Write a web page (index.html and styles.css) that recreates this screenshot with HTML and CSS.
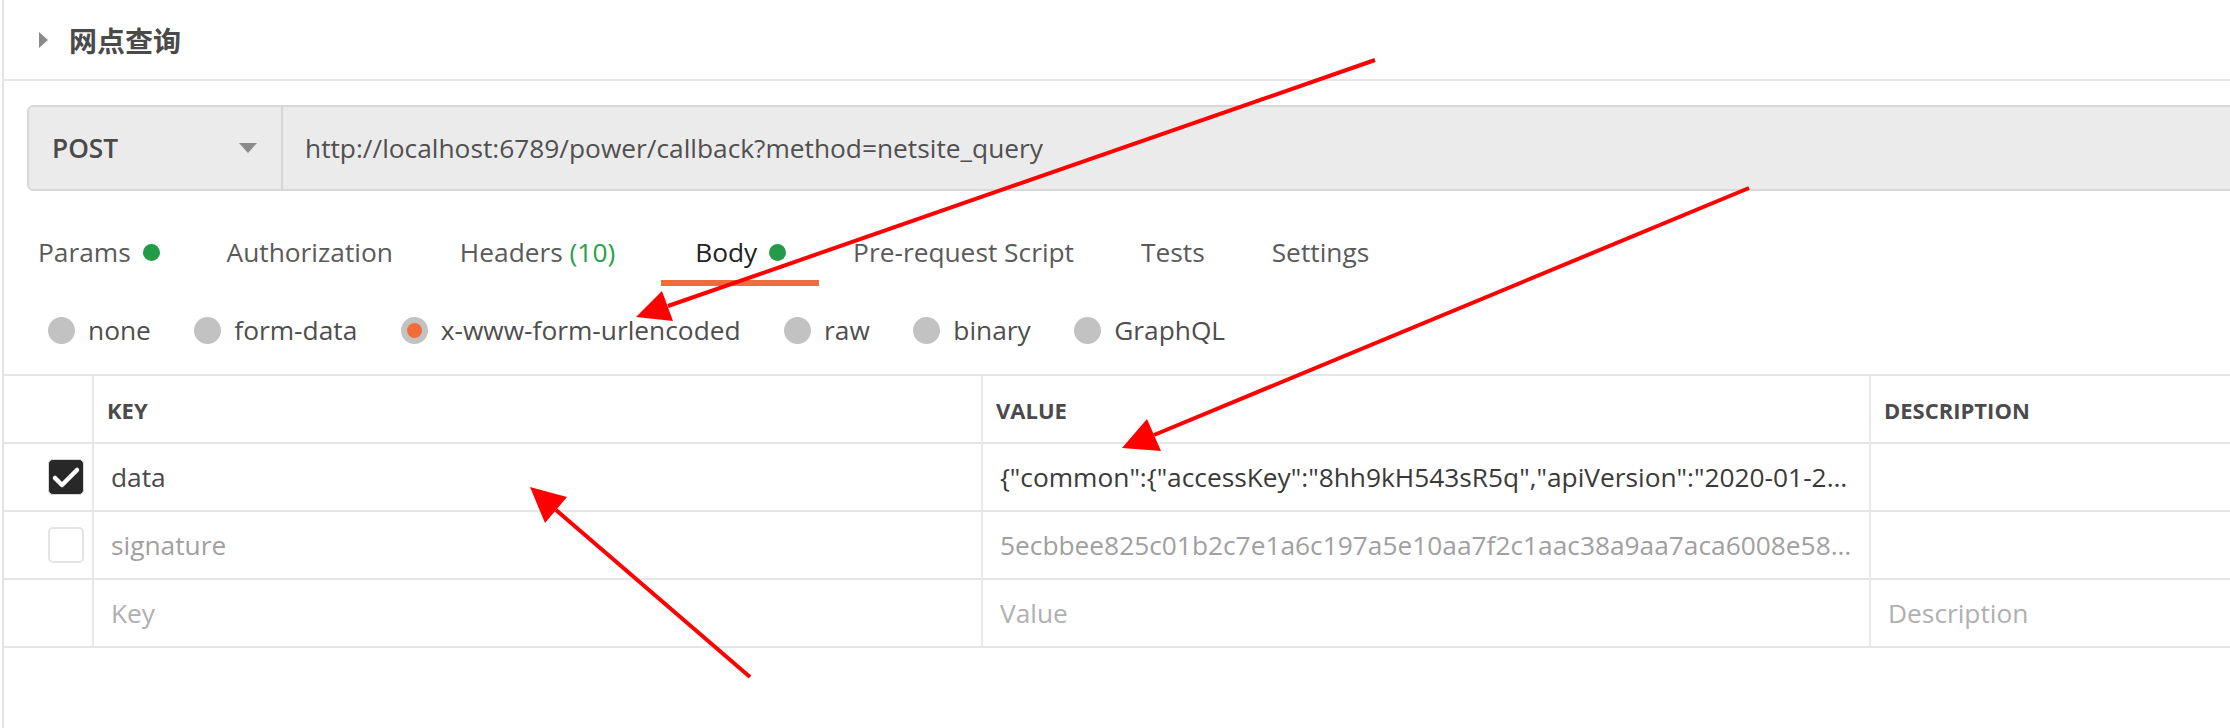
FILE: index.html
```html
<!DOCTYPE html>
<html lang="zh">
<head>
<meta charset="utf-8">
<title>网点查询</title>
<link rel="stylesheet" href="styles.css">
</head>
<body>
<div class="page">
  <header class="header">
    <span class="caret"></span>
    <h1 class="title">网点查询</h1>
  </header>

  <section class="request">
    <div class="urlbar">
      <div class="method">
        <span class="method-name">POST</span>
        <span class="method-arrow"></span>
      </div>
      <div class="url">http://localhost:6789/power/callback?method=netsite_query</div>
    </div>
  </section>

  <nav class="tabs">
    <div class="tab">Params <span class="dot"></span></div>
    <div class="tab">Authorization</div>
    <div class="tab">Headers <span class="count">(10)</span></div>
    <div class="tab tab-active">Body <span class="dot"></span></div>
    <div class="tab">Pre-request Script</div>
    <div class="tab">Tests</div>
    <div class="tab">Settings</div>
  </nav>

  <div class="radios">
    <div class="radio"><span class="radio-dot"></span>none</div>
    <div class="radio"><span class="radio-dot"></span>form-data</div>
    <div class="radio"><span class="radio-dot radio-on"></span>x-www-form-urlencoded</div>
    <div class="radio"><span class="radio-dot"></span>raw</div>
    <div class="radio"><span class="radio-dot"></span>binary</div>
    <div class="radio"><span class="radio-dot"></span>GraphQL</div>
  </div>

  <div class="table">
    <div class="row row-head">
      <div class="cell cell-check"></div>
      <div class="cell">KEY</div>
      <div class="cell">VALUE</div>
      <div class="cell">DESCRIPTION</div>
    </div>
    <div class="row">
      <div class="cell cell-check">
        <span class="checkbox checked">
          <svg viewBox="0 0 36 36" width="36" height="36"><polyline points="7,19 14,26 29,11" fill="none" stroke="#fff" stroke-width="4.5" stroke-linecap="round" stroke-linejoin="round"/></svg>
        </span>
      </div>
      <div class="cell text-dark">data</div>
      <div class="cell text-value"><span class="clip">{"common":{"accessKey":"8hh9kH543sR5q","apiVersion":"2020-01-20","method":"netsite_query","timestamp":"1590000000"}}</span></div>
      <div class="cell"></div>
    </div>
    <div class="row">
      <div class="cell cell-check"><span class="checkbox"></span></div>
      <div class="cell text-muted">signature</div>
      <div class="cell text-muted"><span class="clip">5ecbbee825c01b2c7e1a6c197a5e10aa7f2c1aac38a9aa7aca6008e58f0d1b2c3</span></div>
      <div class="cell"></div>
    </div>
    <div class="row">
      <div class="cell cell-check"></div>
      <div class="cell text-placeholder">Key</div>
      <div class="cell text-placeholder">Value</div>
      <div class="cell text-placeholder">Description</div>
    </div>
  </div>

  <svg class="annotations" viewBox="0 0 2230 728" width="2230" height="728">
    <g stroke="#ff0000" stroke-width="4" fill="none" stroke-linecap="butt">
      <line x1="1375" y1="60" x2="668" y2="306"/>
      <line x1="1749" y1="188" x2="1154" y2="435"/>
      <line x1="750" y1="677" x2="556" y2="510"/>
    </g>
    <g fill="#ff0000">
      <polygon points="636,317 662,291 673,321"/>
      <polygon points="1122,448 1147,419 1161,451"/>
      <polygon points="530,487 545,523 567,497"/>
    </g>
  </svg>
</div>
</body>
</html>
```

FILE: styles.css
```css
* {
  box-sizing: border-box;
}

html, body {
  margin: 0;
  padding: 0;
  background: #ffffff;
  overflow: hidden;
}

body {
  font-family: "Open Sans", "Noto Sans", "Noto Sans CJK SC", sans-serif;
  font-size: 26.3px;
  color: #505050;
}

.page {
  position: relative;
  margin-left: 2px;
  border-left: 2px solid #e4e4e4;
  min-height: 728px;
}

/* Header */
.header {
  display: flex;
  align-items: center;
  height: 81px;
  padding-left: 35px;
  border-bottom: 2px solid #e6e6e6;
}

.caret {
  width: 0;
  height: 0;
  border-left: 9px solid #8a8a8a;
  border-top: 8px solid transparent;
  border-bottom: 8px solid transparent;
  margin-right: 21px;
}

.title {
  margin: 0;
  font-family: "Noto Sans CJK SC", "Noto Sans", sans-serif;
  font-size: 28px;
  font-weight: 700;
  color: #4a4a4a;
  line-height: 1;
}

/* URL bar */
.request {
  padding: 24px 0 0 23px;
}

.urlbar {
  display: flex;
  align-items: stretch;
  height: 86px;
  margin-right: -20px;
  background: #ebebeb;
  border: 2px solid #d8d8d8;
  border-radius: 6px 0 0 6px;
}

.method {
  display: flex;
  align-items: center;
  justify-content: space-between;
  width: 254px;
  padding: 0 24px 0 23px;
  border-right: 2px solid #d6d6d6;
}

.method-name {
  font-weight: 600;
  color: #4a4a4a;
}

.method-arrow {
  width: 0;
  height: 0;
  border-top: 10px solid #8a8a8a;
  border-left: 9px solid transparent;
  border-right: 9px solid transparent;
}

.url {
  display: flex;
  align-items: center;
  padding-left: 22px;
  color: #505050;
  white-space: nowrap;
}

/* Tabs */
.tabs {
  display: flex;
  margin-top: 43px;
}

.tab {
  display: flex;
  align-items: center;
  line-height: 36px;
  padding: 0 33px 10px 34px;
  border-bottom: 6px solid transparent;
  color: #5a5a5a;
  white-space: pre;
}

.tab-active {
  margin-left: 13px;
  color: #222222;
  border-bottom-color: #f26b3a;
}

.count {
  color: #27a04a;
}

.dot {
  display: inline-block;
  width: 17px;
  height: 17px;
  margin-left: 5px;
  border-radius: 50%;
  background: #239b48;
}

/* Radios */
.radios {
  display: flex;
  align-items: center;
  gap: 43.5px;
  height: 36px;
  margin-top: 26px;
  padding-left: 44px;
}

.radio {
  display: flex;
  align-items: center;
  gap: 13px;
  color: #4e4e4e;
  white-space: nowrap;
}

.radio-dot {
  display: inline-flex;
  align-items: center;
  justify-content: center;
  width: 27px;
  height: 27px;
  border-radius: 50%;
  background: #c2c2c2;
}

.radio-on::after {
  content: "";
  width: 15px;
  height: 15px;
  border-radius: 50%;
  background: #f26b3a;
}

/* Table */
.table {
  margin-top: 26px;
  border-top: 2px solid #e6e6e6;
}

.row {
  display: grid;
  grid-template-columns: 88px 889px 888px 1fr;
  height: 68px;
  border-bottom: 2px solid #e6e6e6;
}

.cell {
  display: flex;
  align-items: center;
  min-width: 0;
  padding: 0 15px 0 17px;
  border-left: 2px solid #e8e8e8;
  white-space: nowrap;
}

.cell-check {
  border-left: none;
  padding: 0 0 0 44px;
}

.row-head .cell {
  padding-left: 13px;
  padding-top: 1px;
  font-size: 22px;
  font-weight: 700;
  color: #4b4b4b;
}

.row-head .cell-check {
  padding: 0;
}

.checkbox {
  display: inline-flex;
  width: 36px;
  height: 36px;
  border: 2px solid #e4e4e4;
  border-radius: 5px;
  background: #ffffff;
}

.checkbox.checked {
  border: 1px solid #d8d8d8;
  background: #282828;
}

.checkbox svg {
  display: block;
  margin: -1px;
}

.clip {
  display: block;
  overflow: hidden;
  text-overflow: ellipsis;
  white-space: nowrap;
  min-width: 0;
}

.text-dark {
  color: #4a4a4a;
}

.text-value {
  color: #3a3a3a;
}

.text-muted {
  color: #a0a0a0;
}

.text-placeholder {
  color: #b0b0b0;
}

/* Annotation overlay */
.annotations {
  position: absolute;
  left: -4px;
  top: 0;
  pointer-events: none;
}
```
